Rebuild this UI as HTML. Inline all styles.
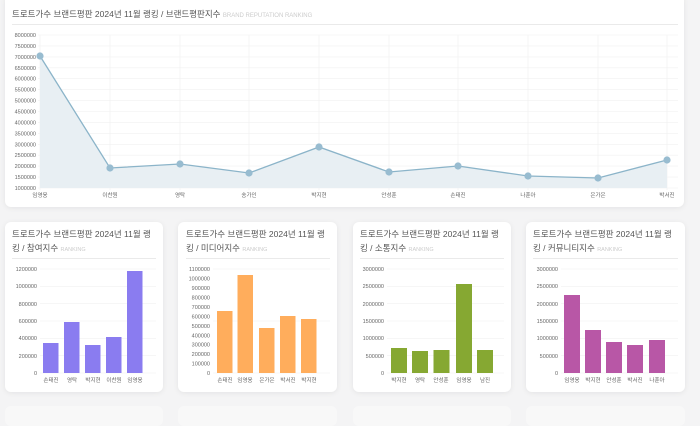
<!DOCTYPE html>
<html><head><meta charset="utf-8"><style>
body{margin:0;width:700px;height:408px;overflow:hidden;background:#f4f4f5;font-family:"Liberation Sans","Noto Sans CJK KR",sans-serif;position:relative}
.card{position:absolute;background:#fff;border-radius:6px;box-shadow:0 1px 6px rgba(0,0,0,.07)}
svg{position:absolute;left:0;top:0}
</style></head><body>
<div class="card" style="left:5px;top:-6px;width:679px;height:213px"></div>
<div class="card" style="left:5px;top:222px;width:158px;height:170px"></div>
<div class="card" style="left:178px;top:222px;width:159px;height:170px"></div>
<div class="card" style="left:353px;top:222px;width:158px;height:170px"></div>
<div class="card" style="left:526px;top:222px;width:159px;height:170px"></div>
<div class="card" style="left:5px;top:406px;width:158px;height:20px;box-shadow:none;background:#f8f8f8"></div>
<div class="card" style="left:178px;top:406px;width:159px;height:20px;box-shadow:none;background:#f8f8f8"></div>
<div class="card" style="left:353px;top:406px;width:158px;height:20px;box-shadow:none;background:#f8f8f8"></div>
<div class="card" style="left:526px;top:406px;width:159px;height:20px;box-shadow:none;background:#f8f8f8"></div>
<svg width="700" height="408" font-family="Liberation Sans, Noto Sans CJK KR, sans-serif">
<text x="12" y="17" font-size="8.5" fill="#555">트로트가수 브랜드평판 2024년 11월 랭킹 / 브랜드평판지수 <tspan font-size="6" fill="#ccc">BRAND REPUTATION RANKING</tspan></text>
<line x1="12" y1="24.5" x2="678" y2="24.5" stroke="#eaeaea"/>
<g stroke="#f0f0f0" stroke-width="0.6">
<line x1="38" y1="35" x2="678" y2="35"/><line x1="38" y1="45.9" x2="678" y2="45.9"/><line x1="38" y1="56.9" x2="678" y2="56.9"/><line x1="38" y1="67.8" x2="678" y2="67.8"/><line x1="38" y1="78.7" x2="678" y2="78.7"/><line x1="38" y1="89.6" x2="678" y2="89.6"/><line x1="38" y1="100.6" x2="678" y2="100.6"/><line x1="38" y1="111.5" x2="678" y2="111.5"/><line x1="38" y1="122.4" x2="678" y2="122.4"/><line x1="38" y1="133.4" x2="678" y2="133.4"/><line x1="38" y1="144.3" x2="678" y2="144.3"/><line x1="38" y1="155.2" x2="678" y2="155.2"/><line x1="38" y1="166.1" x2="678" y2="166.1"/><line x1="38" y1="177.1" x2="678" y2="177.1"/><line x1="38" y1="188" x2="678" y2="188"/>
<line x1="40" y1="35" x2="40" y2="190"/><line x1="110" y1="35" x2="110" y2="190"/><line x1="180" y1="35" x2="180" y2="190"/><line x1="249" y1="35" x2="249" y2="190"/><line x1="319" y1="35" x2="319" y2="190"/><line x1="389" y1="35" x2="389" y2="190"/><line x1="458" y1="35" x2="458" y2="190"/><line x1="528" y1="35" x2="528" y2="190"/><line x1="598" y1="35" x2="598" y2="190"/><line x1="667" y1="35" x2="667" y2="190"/>
</g>
<g font-size="5.5" fill="#666" text-anchor="end">
<text x="36" y="37">8000000</text><text x="36" y="47.9">7500000</text><text x="36" y="58.9">7000000</text><text x="36" y="69.8">6500000</text><text x="36" y="80.7">6000000</text><text x="36" y="91.6">5500000</text><text x="36" y="102.6">5000000</text><text x="36" y="113.5">4500000</text><text x="36" y="124.4">4000000</text><text x="36" y="135.4">3500000</text><text x="36" y="146.3">3000000</text><text x="36" y="157.2">2500000</text><text x="36" y="168.1">2000000</text><text x="36" y="179.1">1500000</text><text x="36" y="190">1000000</text>
</g>
<g font-size="5.5" fill="#666" text-anchor="middle">
<text x="40" y="197">임영웅</text><text x="110" y="197">이찬원</text><text x="180" y="197">영탁</text><text x="249" y="197">송가인</text><text x="319" y="197">박지현</text><text x="389" y="197">안성훈</text><text x="458" y="197">손태진</text><text x="528" y="197">나훈아</text><text x="598" y="197">은가은</text><text x="667" y="197">박서진</text>
</g>
<polygon points="40,56 110,168 180,164 249,173 319,147 389,172 458,166 528,176 598,178 667,160 667,188 40,188" fill="#e8eff3"/>
<polyline points="40,56 110,168 180,164 249,173 319,147 389,172 458,166 528,176 598,178 667,160" fill="none" stroke="#8bb4c9" stroke-width="1.3"/>
<g fill="#98bcd0"><circle cx="40" cy="56" r="3.6"/><circle cx="110" cy="168" r="3.6"/><circle cx="180" cy="164" r="3.6"/><circle cx="249" cy="173" r="3.6"/><circle cx="319" cy="147" r="3.6"/><circle cx="389" cy="172" r="3.6"/><circle cx="458" cy="166" r="3.6"/><circle cx="528" cy="176" r="3.6"/><circle cx="598" cy="178" r="3.6"/><circle cx="667" cy="160" r="3.6"/></g>

<g font-size="8.5" fill="#555">
<text x="12" y="237">트로트가수 브랜드평판 2024년 11월 랭</text><text x="12" y="251">킹 / 참여지수 <tspan font-size="5.5" fill="#ccc">RANKING</tspan></text>
<text x="186" y="237">트로트가수 브랜드평판 2024년 11월 랭</text><text x="186" y="251">킹 / 미디어지수 <tspan font-size="5.5" fill="#ccc">RANKING</tspan></text>
<text x="360" y="237">트로트가수 브랜드평판 2024년 11월 랭</text><text x="360" y="251">킹 / 소통지수 <tspan font-size="5.5" fill="#ccc">RANKING</tspan></text>
<text x="533" y="237">트로트가수 브랜드평판 2024년 11월 랭</text><text x="533" y="251">킹 / 커뮤니티지수 <tspan font-size="5.5" fill="#ccc">RANKING</tspan></text>
</g>
<g stroke="#eaeaea"><line x1="12" y1="258.5" x2="156" y2="258.5"/><line x1="186" y1="258.5" x2="330" y2="258.5"/><line x1="360" y1="258.5" x2="504" y2="258.5"/><line x1="533" y1="258.5" x2="678" y2="258.5"/></g>
<g stroke="#f0f0f0" stroke-width="0.6">
<line x1="40" y1="269" x2="156" y2="269"/><line x1="40" y1="286.3" x2="156" y2="286.3"/><line x1="40" y1="303.7" x2="156" y2="303.7"/><line x1="40" y1="321" x2="156" y2="321"/><line x1="40" y1="338.3" x2="156" y2="338.3"/><line x1="40" y1="355.7" x2="156" y2="355.7"/><line x1="40" y1="373" x2="156" y2="373"/>
<line x1="213" y1="269" x2="330" y2="269"/><line x1="213" y1="321" x2="330" y2="321"/><line x1="213" y1="373" x2="330" y2="373"/>
<line x1="387" y1="269" x2="504" y2="269"/><line x1="387" y1="286.3" x2="504" y2="286.3"/><line x1="387" y1="303.7" x2="504" y2="303.7"/><line x1="387" y1="321" x2="504" y2="321"/><line x1="387" y1="338.3" x2="504" y2="338.3"/><line x1="387" y1="355.7" x2="504" y2="355.7"/><line x1="387" y1="373" x2="504" y2="373"/>
<line x1="561" y1="269" x2="678" y2="269"/><line x1="561" y1="286.3" x2="678" y2="286.3"/><line x1="561" y1="303.7" x2="678" y2="303.7"/><line x1="561" y1="321" x2="678" y2="321"/><line x1="561" y1="338.3" x2="678" y2="338.3"/><line x1="561" y1="355.7" x2="678" y2="355.7"/><line x1="561" y1="373" x2="678" y2="373"/>
</g>
<g font-size="5.5" fill="#666" text-anchor="end">
<text x="37" y="271">1200000</text><text x="37" y="288">1000000</text><text x="37" y="306">800000</text><text x="37" y="323">600000</text><text x="37" y="340">400000</text><text x="37" y="358">200000</text><text x="37" y="375">0</text>
<text x="210" y="271">1100000</text><text x="210" y="280.5">1000000</text><text x="210" y="290">900000</text><text x="210" y="299.4">800000</text><text x="210" y="308.9">700000</text><text x="210" y="318.3">600000</text><text x="210" y="327.8">500000</text><text x="210" y="337.3">400000</text><text x="210" y="346.7">300000</text><text x="210" y="356.2">200000</text><text x="210" y="365.6">100000</text><text x="210" y="375">0</text>
<text x="384" y="271">3000000</text><text x="384" y="288">2500000</text><text x="384" y="306">2000000</text><text x="384" y="323">1500000</text><text x="384" y="340">1000000</text><text x="384" y="358">500000</text><text x="384" y="375">0</text>
<text x="558" y="271">3000000</text><text x="558" y="288">2500000</text><text x="558" y="306">2000000</text><text x="558" y="323">1500000</text><text x="558" y="340">1000000</text><text x="558" y="358">500000</text><text x="558" y="375">0</text>
</g>
<g fill="#8a7cf0"><rect x="43" y="343" width="15.5" height="30"/><rect x="64" y="322" width="15.5" height="51"/><rect x="85" y="345" width="15.5" height="28"/><rect x="106" y="337" width="15.5" height="36"/><rect x="127" y="271" width="15.5" height="102"/></g>
<g fill="#ffad5c"><rect x="217" y="311" width="15.5" height="62"/><rect x="237.5" y="275" width="15.5" height="98"/><rect x="259" y="328" width="15.5" height="45"/><rect x="280" y="316" width="15.5" height="57"/><rect x="301" y="319" width="15.5" height="54"/></g>
<g fill="#86a832"><rect x="391" y="348" width="16" height="25"/><rect x="412" y="351" width="16" height="22"/><rect x="433.5" y="350" width="16" height="23"/><rect x="456" y="284" width="16" height="89"/><rect x="477" y="350" width="16" height="23"/></g>
<g fill="#b857a6"><rect x="564" y="295" width="16" height="78"/><rect x="585" y="330" width="16" height="43"/><rect x="606" y="342" width="16" height="31"/><rect x="627" y="345" width="16" height="28"/><rect x="649" y="340" width="16" height="33"/></g>
<g font-size="5.5" fill="#666" text-anchor="middle">
<text x="51" y="382">손태진</text><text x="72" y="382">영탁</text><text x="93" y="382">박지현</text><text x="114" y="382">이찬원</text><text x="135" y="382">임영웅</text>
<text x="225" y="382">손태진</text><text x="245" y="382">임영웅</text><text x="267" y="382">은가은</text><text x="288" y="382">박서진</text><text x="309" y="382">박지현</text>
<text x="399" y="382">박지현</text><text x="420" y="382">영탁</text><text x="441" y="382">안성훈</text><text x="464" y="382">임영웅</text><text x="485" y="382">남진</text>
<text x="572" y="382">임영웅</text><text x="593" y="382">박지현</text><text x="614" y="382">안성훈</text><text x="635" y="382">박서진</text><text x="657" y="382">나훈아</text>
</g>
</svg>
</body></html>
